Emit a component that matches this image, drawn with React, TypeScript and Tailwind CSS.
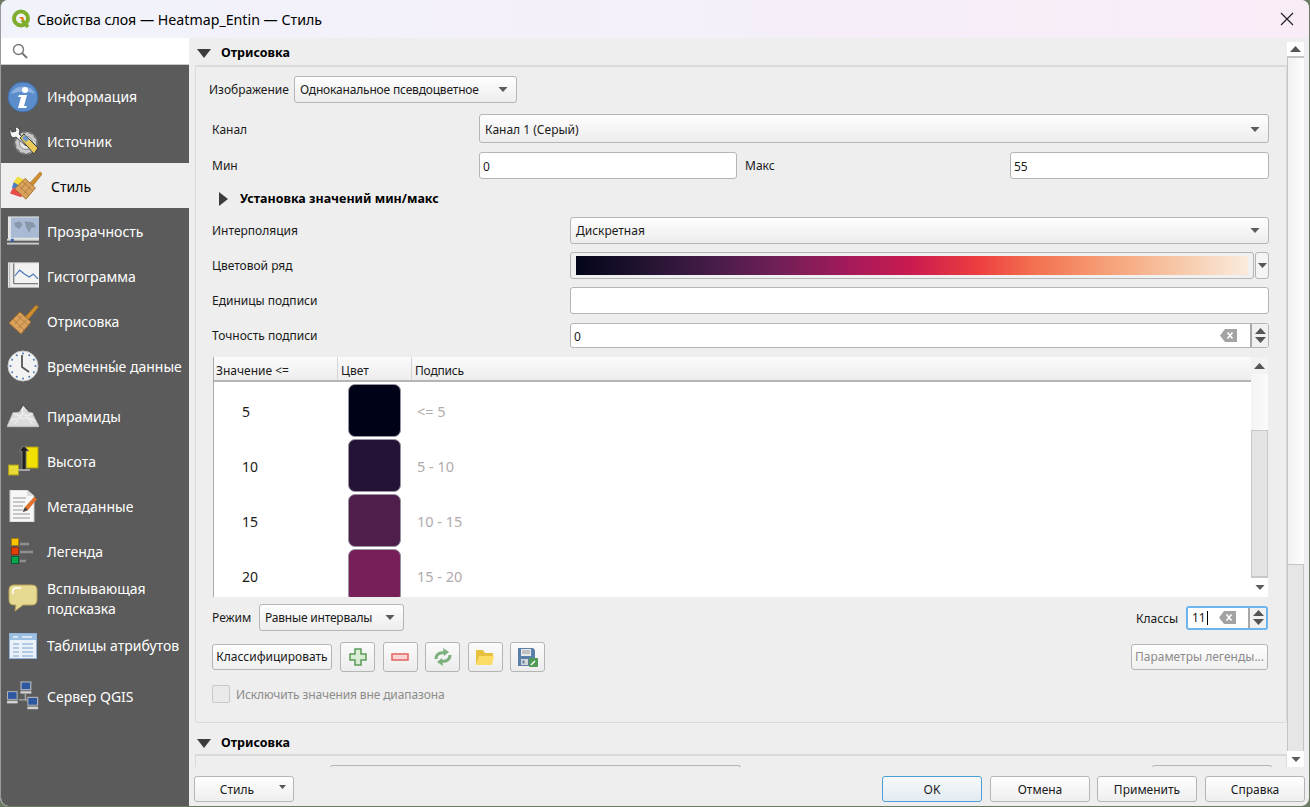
import type { ReactNode } from 'react';

const Caret = ({ className = '' }: { className?: string }) => (
  <svg width="10" height="5" viewBox="0 0 11 6" className={className}>
    <path d="M0 0h11L5.500 6z" fill="#5c5c5c" />
  </svg>
);

const Combo = ({ children, className }: { children: ReactNode; className: string }) => (
  <div className={`flex items-center justify-between rounded-[3px] border border-[#b5b5b5] bg-gradient-to-b from-[#fefefe] to-[#ededed] pl-[5px] pr-[8px] ${className}`}>
    <span className="whitespace-nowrap">{children}</span>
    <Caret />
  </div>
);

const Input = ({ children, className }: { children?: ReactNode; className: string }) => (
  <div className={`flex items-center rounded-[3px] border border-[#b5b5b5] bg-white pl-[3px] ${className}`}>{children}</div>
);

const ClearIcon = () => (
  <svg width="17" height="13" viewBox="0 0 17 13">
    <path d="M5 0h12v13H5L0 6.500z" fill="#a3a3a3" />
    <path d="M7.500 3.500l5 6M12.500 3.500l-5 6" stroke="#fff" strokeWidth="1.600" />
  </svg>
);

const Spin = () => (
  <div className="flex h-full w-[18px] flex-col items-center justify-center gap-[3px] border-l-2 border-[#a8a8a8] bg-[#f0f0f0]">
    <svg width="11" height="6" viewBox="0 0 11 6"><path d="M0 6h11L5.500 0z" fill="#555" /></svg>
    <svg width="11" height="6" viewBox="0 0 11 6"><path d="M0 0h11L5.500 6z" fill="#555" /></svg>
  </div>
);

const Label = ({ children, className }: { children: ReactNode; className: string }) => (
  <div className={`shrink-0 whitespace-nowrap ${className}`}>{children}</div>
);

const SectionHead = ({ className = '' }: { className?: string }) => (
  <div className={`flex items-center pl-[7px] ${className}`}>
    <svg width="14" height="9" viewBox="0 0 14 9"><path d="M0 0h14L7 9z" fill="#3c3c3c" /></svg>
    <span className="ml-[10px] text-[12.500px] font-bold text-black">Отрисовка</span>
  </div>
);

const Logo = () => (
  <svg width="20" height="20" viewBox="0 0 20 20">
    <circle cx="10" cy="9.500" r="7" fill="none" stroke="#7fae2e" strokeWidth="4" />
    <path d="M11 11l6 7" stroke="#7fae2e" strokeWidth="3.500" />
    <path d="M8 8h4.500v4.500z" fill="#ee7913" />
  </svg>
);

const InfoIcon = () => (
  <svg width="32" height="32" viewBox="0 0 32 32">
    <circle cx="16" cy="16" r="15" fill="#5b8ccb" stroke="#3f6ea8" />
    <path d="M4 13A13 12 0 0 1 28 13Q16 8 4 13z" fill="#8db1de" />
    <circle cx="18" cy="9" r="3" fill="#fff" />
    <path d="M12 14h8l-3 11h3l-1 2h-8l3-11h-3z" fill="#fff" />
  </svg>
);

const SourceIcon = () => (
  <svg width="32" height="32" viewBox="0 0 32 32">
    <circle cx="19" cy="18" r="11" fill="#c9c9c9" stroke="#777" strokeWidth="2" strokeDasharray="4 2" />
    <circle cx="19" cy="18" r="6.500" fill="#e9e9e9" stroke="#8a8a8a" />
    <path d="M3 3l2 4 4-1-1-4c4 0 6 4 4 7l10 9-3 3-10-9c-3 2-7 0-6-9z" fill="#f5f5f5" stroke="#444" strokeWidth="1" />
    <path d="M13 13l4-4 14 14-4 6z" fill="#e8c95a" stroke="#3a3a3a" />
    <path d="M15 13l3-3 4 4-3 3z" fill="#6d97c8" />
  </svg>
);

const Broom = () => (
  <g>
    <path d="M18 12L29 0l2.500 2L21 15z" fill="#cf8f2e" stroke="#9a6518" strokeWidth=".6" />
    <path d="M13 7l11 10-10 12L2 18z" fill="#d8a25c" stroke="#a46d2c" strokeWidth="1" />
    <path d="M10 10l11 10M6 14l11 11M12 23l7-8M8 19l7-8" stroke="#a9733a" strokeWidth=".8" />
  </g>
);

const StyleIcon = () => (
  <svg width="34" height="32" viewBox="0 0 34 32">
    <path d="M3 13l5-7 11 5-6 7z" fill="#f0df3e" />
    <path d="M2 18l2-6 10 6-2 5z" fill="#4a7cc9" />
    <path d="M0 24l3-6 11 5-2 5z" fill="#e64a4a" />
    <g transform="translate(3 1)"><Broom /></g>
  </svg>
);

const TransparencyIcon = () => (
  <svg width="33" height="30" viewBox="0 0 33 30">
    <rect x="1" y="0" width="32" height="24" fill="#e7e7e7" />
    <rect x="4" y="1" width="29" height="21" fill="#a9bbd4" />
    <path d="M7 7l6-2 3 3-3 5-4-2zM18 5l9 1 3 5-5 1-2 5-3-5z" fill="#8a98ac" />
    <rect x="0" y="23" width="33" height="2" fill="#d9d9d9" />
    <rect x="4" y="23" width="3" height="3" fill="#3a64b0" />
    <rect x="0" y="27" width="33" height="2" fill="#c9c9c9" />
  </svg>
);

const HistogramIcon = () => (
  <svg width="33" height="28" viewBox="0 0 33 28">
    <rect x="1" y="0" width="32" height="26" fill="#e8e8e8" />
    <rect x="6" y="2" width="27" height="22" fill="#f2f2f2" />
    <path d="M7 1v21h25" fill="none" stroke="#555" />
    <path d="M8 14l5-6 5 4 5 3 4-3 5 5" fill="none" stroke="#4a78b8" strokeWidth="1.200" />
    <rect x="2" y="0" width="1" height="26" fill="#bbb" />
  </svg>
);

const RenderIcon = () => (
  <svg width="32" height="32" viewBox="0 0 32 32"><Broom /></svg>
);

const ClockIcon = () => (
  <svg width="32" height="32" viewBox="0 0 32 32">
    <circle cx="16" cy="16" r="15" fill="#f3f3f3" stroke="#c9c9c9" />
    {[...Array(12)].map((_, i) => (
      <circle key={i} cx={16 + 12.500 * Math.sin((i * Math.PI) / 6)} cy={16 - 12.500 * Math.cos((i * Math.PI) / 6)} r="1" fill="#4d78b4" />
    ))}
    <path d="M15 5v12l7 5" fill="none" stroke="#555" strokeWidth="1.800" />
  </svg>
);

const PyramidIcon = () => (
  <svg width="33" height="24" viewBox="0 0 33 24">
    <path d="M0 23l6-14 7-1 4-7 5 7 4 1 7 14z" fill="#dcdcdc" stroke="#bdbdbd" />
    <path d="M6 9l7 3 4-2 4 2 6-3M8 20l5-7 4 2 4-2 5 7M16 2v8M4 17l6-3M29 17l-6-3" fill="none" stroke="#f7f7f7" />
    <path d="M13 5l4-4 4 4" fill="none" stroke="#333" strokeWidth=".8" />
  </svg>
);

const ElevationIcon = () => (
  <svg width="31" height="32" viewBox="0 0 31 32">
    <rect x="18" y="2" width="12" height="21" fill="#f2e100" stroke="#a89b1a" />
    <rect x="0.500" y="20" width="10" height="10" fill="#e7da34" stroke="#a89b1a" />
    <path d="M14 25V6h-3l5-5 5 5h-3v19z" fill="#1f1f1f" stroke="#888" strokeWidth=".8" />
    <path d="M10 25h12" stroke="#bbb" strokeWidth="1.500" />
  </svg>
);

const MetaIcon = () => (
  <svg width="28" height="32" viewBox="0 0 28 32">
    <path d="M1 0h17l7 6v26H1z" fill="#f7f7f7" stroke="#ccc" />
    <path d="M18 0v6h7" fill="#ddd" />
    <path d="M4 8h13M4 12h12M4 16h10M4 20h11M4 24h17M4 28h17" stroke="#9a9a9a" strokeWidth="1.200" />
    <path d="M14 22l2-5 9-10 3 2-9 11z" fill="#e0702d" />
    <path d="M14 22l2-5 3 3z" fill="#444" />
  </svg>
);

const LegendIcon = () => (
  <svg width="24" height="26" viewBox="0 0 24 26">
    <rect x="0.500" y="0.500" width="7" height="7" fill="#fdc400" stroke="#a07a10" />
    <rect x="0.500" y="9.500" width="7" height="7" fill="#e63d00" stroke="#8d3010" />
    <rect x="0.500" y="18.500" width="7" height="7" fill="#0aa64d" stroke="#0a5a33" />
    <path d="M9 6h9M9 14h13M9 23h6" stroke="#8f8f8f" strokeWidth="2.500" />
  </svg>
);

const TipIcon = () => (
  <svg width="30" height="28" viewBox="0 0 30 28">
    <path d="M6 1h18q5 0 5 5v10q0 5-5 5H15l-8 6 1-6H6q-5 0-5-5V6q0-5 5-5z" fill="#e6da92" stroke="#b8a65a" />
    <path d="M5 10V7q0-3 3-3h5" fill="none" stroke="#fff" strokeWidth="1.500" />
  </svg>
);

const TableIcon = () => (
  <svg width="28" height="26" viewBox="0 0 28 26">
    <rect x="0.500" y="0.500" width="27" height="25" fill="#eaf1f8" stroke="#8fb2d6" />
    <rect x="1" y="1" width="26" height="6" fill="#9cc0e4" />
    <path d="M4 4h5M13 4h10" stroke="#eaf1f8" strokeWidth="1.500" />
    <path d="M4 11h6M13 11h11M4 15h6M13 15h11M4 19h6M13 19h11M4 23h6M13 23h11" stroke="#7ba3cd" strokeWidth="1.200" />
  </svg>
);

const Monitor = ({ x, y }: { x: number; y: number }) => (
  <g transform={`translate(${x} ${y})`}>
    <rect x="0" y="0" width="11" height="9" fill="#c9c9c9" stroke="#888" strokeWidth=".6" />
    <rect x="1" y="1" width="9" height="7" fill="#2d57a0" />
    <rect x="0" y="10" width="11" height="2.500" fill="#d5d5d5" stroke="#999" strokeWidth=".4" />
  </g>
);

const ServerIcon = () => (
  <svg width="33" height="30" viewBox="0 0 33 30">
    <path d="M12 19h9M19 13v6M21 19v2" stroke="#aaa" strokeWidth="1.500" />
    <Monitor x={0} y={10} />
    <Monitor x={14} y={0} />
    <Monitor x={21} y={16} />
  </svg>
);

const sideItems: { name: ReactNode; icon: ReactNode; h: string; text?: string; selected?: boolean }[] = [
  { name: 'Информация', icon: <InfoIcon />, h: 'h-[45px]' },
  { name: 'Источник', icon: <SourceIcon />, h: 'h-[44px]', text: 'pt-[2px]' },
  { name: 'Стиль', icon: <StyleIcon />, h: 'h-[45px]', text: 'pt-[2px]', selected: true },
  { name: 'Прозрачность', icon: <TransparencyIcon />, h: 'h-[45px]', text: 'pt-[2px]' },
  { name: 'Гистограмма', icon: <HistogramIcon />, h: 'h-[45px]', text: 'pt-[2px]' },
  { name: 'Отрисовка', icon: <RenderIcon />, h: 'h-[45px]', text: 'pt-[2px]' },
  { name: 'Временны́е данные', icon: <ClockIcon />, h: 'h-[45px]', text: 'pt-[2px]' },
  { name: 'Пирамиды', icon: <PyramidIcon />, h: 'h-[45px] mt-[5px]', text: 'pt-[2px]' },
  { name: 'Высота', icon: <ElevationIcon />, h: 'h-[45px]', text: 'pt-[2px]' },
  { name: 'Метаданные', icon: <MetaIcon />, h: 'h-[45px]', text: 'pt-[2px]' },
  { name: 'Легенда', icon: <LegendIcon />, h: 'h-[45px]', text: 'pt-[2px]' },
  { name: <>Всплывающая<br />подсказка</>, icon: <TipIcon />, h: 'h-[49px]', text: 'pt-[2px]' },
  { name: 'Таблицы атрибутов', icon: <TableIcon />, h: 'h-[47px]' },
  { name: 'Сервер QGIS', icon: <ServerIcon />, h: 'h-[45px] mt-[4px]', text: 'pt-[2px]' },
];

const Sidebar = () => (
  <div className="flex w-[188px] shrink-0 flex-col rounded-bl-[8px] bg-[#5b5b5b]">
    <div className="flex h-[27px] shrink-0 items-center border-b border-[#c8c8c8] bg-white pl-[11px]">
      <svg width="16" height="16" viewBox="0 0 16 16" fill="none" stroke="#777" strokeWidth="1.400">
        <circle cx="6.500" cy="6.500" r="5" />
        <path d="M10 10l5 5" strokeWidth="2" />
      </svg>
    </div>
    <div className="h-[9px] shrink-0" />
    {sideItems.map((item, i) => (
      <div key={i} className={`flex shrink-0 items-center ${item.h} ${item.selected ? 'bg-[#eeeeee] pl-[9px] text-black' : 'pl-[6px] text-white'}`}>
        <div className={`flex h-[32px] w-[32px] shrink-0 items-center justify-center ${item.selected ? 'mr-[9px]' : 'mr-[8px]'}`}>{item.icon}</div>
        <span className={`whitespace-nowrap text-[14px] leading-[20px] ${item.text ?? ''}`}>{item.name}</span>
      </div>
    ))}
  </div>
);

const swatches = [
  { value: '5', color: 'bg-[#000317]', label: '<= 5' },
  { value: '10', color: 'bg-[#241337]', label: '5 - 10' },
  { value: '15', color: 'bg-[#4d1f4a]', label: '10 - 15' },
  { value: '20', color: 'bg-[#771f58]', label: '15 - 20' },
];

const IconBtn = ({ children }: { children: ReactNode }) => (
  <div className="flex h-[30px] w-[35px] items-center justify-center rounded-[3px] border border-[#b5b5b5] bg-gradient-to-b from-[#fbfbfb] to-[#ececec]">{children}</div>
);

const Btn = ({ children, className }: { children: ReactNode; className: string }) => (
  <div className={`flex h-[26px] items-center justify-center rounded-[3px] border ${className}`}>{children}</div>
);

const plainBtn = 'border-[#b5b5b5] bg-gradient-to-b from-[#fefefe] to-[#efefef]';

const ColorTable = () => (
  <div className="mt-[9px] ml-[17px] flex h-[240px] w-[1055px] overflow-hidden border-l border-[#aaa]">
    <div className="flex min-w-0 flex-1 flex-col bg-white">
      <div className="flex h-[25px] shrink-0 border-b-2 border-[#b5b5b5] bg-gradient-to-b from-[#fbfbfb] to-[#ededed]">
        <div className="w-[124px] border-r border-[#d5d5d5] pl-[2px] pt-[5px]">Значение &lt;=</div>
        <div className="w-[74px] border-r border-[#d5d5d5] pl-[3px] pt-[5px]">Цвет</div>
        <div className="pl-[3px] pt-[5px] tracking-[-0.2px]">Подпись</div>
      </div>
      <div className="flex flex-col pt-[1px]">
        {swatches.map(row => (
          <div key={row.value} className="flex h-[55px] shrink-0 items-center">
            <div className="w-[134px] pl-[28px] pt-[2px] text-[14px]">{row.value}</div>
            <div className={`h-[53px] w-[53px] shrink-0 rounded-[7px] border border-[#9a94a2] ${row.color}`} />
            <div className="pl-[16px] pt-[2px] text-[14.500px] text-[#b0abab]">{row.label}</div>
          </div>
        ))}
      </div>
    </div>
    <div className="flex w-[17px] shrink-0 flex-col bg-[#f2f2f2]">
      <div className="flex h-[17px] items-center justify-center"><svg width="11" height="6" viewBox="0 0 11 6"><path d="M0 6h11L5.500 0z" fill="#555" /></svg></div>
      <div className="h-[56px] bg-gradient-to-r from-[#f4f4f4] to-[#fafafa]" />
      <div className="flex-1 border-x border-t border-b-2 border-[#c8c8c8] bg-[#e4e4e4]" />
      <div className="flex h-[19px] items-center justify-center bg-white"><Caret /></div>
    </div>
  </div>
);

const RenderGroup = () => (
  <div className="ml-[5px] h-[658px] w-[1092px] rounded-[2px] border-x border-b border-t-[2px] border-[#dadada] pt-[9px]">
    <div className="flex items-center">
      <Label className="w-[98px] pl-[13px]">Изображение</Label>
      <Combo className="h-[27px] w-[223px] tracking-[-0.18px]">Одноканальное псевдоцветное</Combo>
    </div>
    <div className="mt-[11px] flex items-center">
      <Label className="w-[283px] pl-[16px] pt-[2px]">Канал</Label>
      <Combo className="h-[29px] w-[790px] pt-[2px]">Канал 1 (Серый)</Combo>
    </div>
    <div className="mt-[9px] flex items-center">
      <Label className="w-[283px] pl-[16px]">Мин</Label>
      <Input className="h-[27px] w-[258px] pt-[2px]">0</Input>
      <Label className="w-[273px] pl-[8px]">Макс</Label>
      <Input className="h-[27px] w-[259px] pt-[2px]">55</Input>
    </div>
    <div className="mt-[11px] flex h-[17px] items-center pl-[23px]">
      <svg width="9" height="14" viewBox="0 0 9 14"><path d="M0 0v14l9-7z" fill="#3c3c3c" /></svg>
      <span className="ml-[12px] pt-[2px] text-[12.500px] font-bold text-black">Установка значений мин/макс</span>
    </div>
    <div className="mt-[10px] flex items-center">
      <Label className="w-[374px] pl-[16px]">Интерполяция</Label>
      <Combo className="h-[27px] w-[699px]">Дискретная</Combo>
    </div>
    <div className="mt-[8px] flex items-center">
      <Label className="w-[374px] pl-[16px]">Цветовой ряд</Label>
      <div className="h-[27px] w-[684px] rounded-[3px] border border-[#b5b5b5] bg-[#f0f0f0] px-[5px] py-[3px]">
        <div className="h-full w-full bg-[linear-gradient(to_right,#03051a_0%,#221331_10%,#451c47_20%,#701f57_30%,#a11a5b_40%,#cb1b4f_50%,#ed3f3f_60%,#f3704f_68%,#f6a47b_80%,#f7c9aa_90%,#faebdd_100%)]" />
      </div>
      <div className="ml-[1px] flex h-[27px] w-[14px] items-center justify-center rounded-[3px] border border-[#b5b5b5] bg-[#f4f4f4]"><svg width="9" height="5" viewBox="0 0 11 6"><path d="M0 0h11L5.500 6z" fill="#555" /></svg></div>
    </div>
    <div className="mt-[8px] flex items-center">
      <Label className="w-[374px] pl-[16px]">Единицы подписи</Label>
      <Input className="h-[27px] w-[699px]" />
    </div>
    <div className="mt-[9px] flex items-center">
      <Label className="w-[374px] pl-[16px]">Точность подписи</Label>
      <Input className="h-[25px] w-[699px] overflow-hidden">
        <span className="flex-1 pt-[2px]">0</span>
        <div className="mr-[13px]"><ClearIcon /></div>
        <Spin />
      </Input>
    </div>
    <ColorTable />
    <div className="mt-[7px] flex items-center">
      <Label className="w-[63px] pl-[16px]">Режим</Label>
      <Combo className="h-[27px] w-[145px] tracking-[-0.2px]">Равные интервалы</Combo>
      <div className="flex-1 pr-[8px] pt-[2px] text-right">Классы</div>
      <div className="mr-[18px] flex h-[24px] w-[82px] items-center overflow-hidden rounded-[3px] border-2 border-[#6db5ee] bg-white pl-[4px]">
        <span className="flex-1">11<span className="ml-[1px] inline-block h-[14px] w-px bg-black align-middle" /></span>
        <div className="mr-[12px]"><ClearIcon /></div>
        <Spin />
      </div>
    </div>
    <div className="mt-[11px] flex items-center">
      <div className="ml-[16px]"><Btn className={`w-[120px] ${plainBtn}`}>Классифицировать</Btn></div>
      <div className="ml-[8px] flex gap-[7.500px]">
        <IconBtn>
          <svg width="18" height="18" viewBox="0 0 18 18"><path d="M6 1h6v5h5v6h-5v5H6v-5H1V6h5z" fill="#d9ecd4" stroke="#5b9a58" strokeWidth="1.500" /></svg>
        </IconBtn>
        <IconBtn>
          <svg width="18" height="8" viewBox="0 0 18 8"><rect x="1" y="1" width="16" height="6" fill="#fbd4d4" stroke="#e46262" strokeWidth="1.500" /></svg>
        </IconBtn>
        <IconBtn>
          <svg width="20" height="20" viewBox="0 0 20 20" fill="none" stroke="#7cb07c" strokeWidth="3">
            <path d="M3 12c0-5 4-7 9-6" />
            <path d="M17 8c0 5-4 7-9 6" />
            <path d="M10 1l6 4-5 4zM10 19l-6-4 5-4z" fill="#7cb07c" stroke="none" />
          </svg>
        </IconBtn>
        <IconBtn>
          <svg width="20" height="17" viewBox="0 0 20 17"><path d="M1 16V1h7l2 3h8v3H5z" fill="#e7c13e" /><path d="M1 16l3-9h15l-2 9z" fill="#fbdc66" /></svg>
        </IconBtn>
        <IconBtn>
          <svg width="20" height="20" viewBox="0 0 20 20">
            <path d="M0 1h15l2 2v16H0z" fill="#5a7fa8" />
            <rect x="3" y="2" width="10" height="7" fill="#e9e9e9" />
            <path d="M4 4h8M4 6h8" stroke="#999" />
            <rect x="3" y="12" width="7" height="6" fill="#d5d5d5" />
            <rect x="4.500" y="13.500" width="2" height="3" fill="#5a7fa8" />
            <rect x="11" y="11" width="9" height="9" rx="1" fill="#4f9a55" />
            <path d="M13 18l4-4" stroke="#fff" strokeWidth="1.500" />
          </svg>
        </IconBtn>
      </div>
      <div className="flex-1" />
      <Btn className={`mr-[18px] w-[137px] text-[#8c8c8c] ${plainBtn}`}>Параметры легенды...</Btn>
    </div>
    <div className="mt-[12px] flex items-center pl-[16px] text-[#8c8c8c]">
      <div className="h-[18px] w-[18px] rounded-[2px] border border-[#c8c8c8] bg-[#eaeaea]" />
      <span className="ml-[6px] pt-[2px] tracking-[-0.12px]">Исключить значения вне диапазона</span>
    </div>
  </div>
);

const PageScrollbar = () => (
  <div className="flex w-[17px] shrink-0 flex-col bg-[#e6e6e6]">
    <div className="flex h-[16px] items-center justify-center border-b-2 border-[#c4c4c4] bg-white"><svg width="11" height="6" viewBox="0 0 11 6"><path d="M0 6h11L5.500 0z" fill="#555" /></svg></div>
    <div className="h-[506px] border-l border-[#c4c4c4] bg-gradient-to-r from-[#f1f1f1] to-[#fdfdfd]" />
    <div className="flex-1 border-x border-t border-[#c4c4c4] bg-[#e6e6e6]" />
    <div className="flex h-[16px] items-center justify-center bg-white"><Caret /></div>
  </div>
);

const App = () => (
  <div className="h-[807px] w-[1310px] overflow-hidden bg-[#6d7a63] font-['Noto_Sans',sans-serif] text-[12px] text-[#1a1a1a]">
    <div className="flex h-[806px] w-[1309px] flex-col overflow-hidden rounded-[8px] border-l border-[#9a9a9a] bg-[#eeeeee]">
      <div className="flex h-[38px] shrink-0 items-center bg-gradient-to-r from-[#f1f3fb] to-[#f8ecf7] pl-[10px] pr-[15px]">
        <Logo />
        <span className="ml-[6px] pt-[2px] text-[14.200px] text-black">Свойства слоя — Heatmap_Entin — Стиль</span>
        <svg className="ml-auto" width="14" height="14" viewBox="0 0 14 14"><path d="M1 1l12 12M13 1L1 13" stroke="#222" strokeWidth="1.200" /></svg>
      </div>
      <div className="flex min-h-0 flex-1">
        <Sidebar />
        <div className="ml-[1px] flex min-w-0 flex-1 flex-col">
          <div className="flex h-[729px] shrink-0 pr-[5px] pt-[4px]">
            <div className="min-w-0 flex-1 overflow-hidden">
              <SectionHead className="h-[23px] pb-[1px]" />
              <RenderGroup />
              <SectionHead className="mt-[10px] mb-[1px] h-[20px]" />
              <div className="ml-[5px] flex h-[14px] border-x border-t-2 border-[#dadada] pt-[9px] pl-[134px]">
                <div className="h-[3px] w-[411px] rounded-t-[3px] border-x border-t border-[#b5b5b5]" />
                <div className="ml-[411px] h-[3px] w-[120px] rounded-t-[3px] border-x border-t border-[#b5b5b5]" />
              </div>
            </div>
            <PageScrollbar />
          </div>
          <div className="flex flex-1 items-start pl-[4px] pr-[4px] pt-[9px]">
            <div className="relative flex h-[26px] w-[100px] items-center justify-center rounded-[3px] border border-[#b5b5b5] bg-gradient-to-b from-[#fefefe] to-[#efefef] pr-[14px] pt-[2px]">
              Стиль
              <svg className="absolute right-[7px] top-[8px]" width="7" height="4" viewBox="0 0 7 4"><path d="M0 0h7L3.500 4z" fill="#555" /></svg>
            </div>
            <div className="flex-1" />
            <Btn className="w-[100px] border-[#4f9ed8] bg-gradient-to-b from-[#f6f9fb] to-[#e3ebf1] pt-[2px]">OK</Btn>
            <Btn className={`ml-[8px] w-[100px] pt-[2px] ${plainBtn}`}>Отмена</Btn>
            <Btn className={`ml-[7px] w-[100px] pt-[2px] ${plainBtn}`}>Применить</Btn>
            <Btn className={`ml-[8px] w-[100px] pt-[2px] ${plainBtn}`}>Справка</Btn>
          </div>
        </div>
      </div>
    </div>
  </div>
);

export default App;
